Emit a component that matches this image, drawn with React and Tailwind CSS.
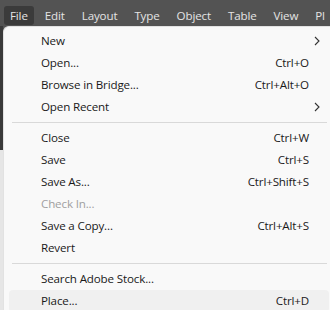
import React from 'react'

const MENUS = ['File', 'Edit', 'Layout', 'Type', 'Object', 'Table', 'View', 'Pl']

const ITEMS = [
  { label: 'New', sub: true },
  { label: 'Open...', keys: 'Ctrl+O' },
  { label: 'Browse in Bridge...', keys: 'Ctrl+Alt+O' },
  { label: 'Open Recent', sub: true },
  { sep: true },
  { label: 'Close', keys: 'Ctrl+W' },
  { label: 'Save', keys: 'Ctrl+S' },
  { label: 'Save As...', keys: 'Ctrl+Shift+S' },
  { label: 'Check In...', disabled: true },
  { label: 'Save a Copy...', keys: 'Ctrl+Alt+S' },
  { label: 'Revert' },
  { sep: true },
  { label: 'Search Adobe Stock...' },
  { label: 'Place...', keys: 'Ctrl+D', hover: true },
]

const Chevron = () => (
  <svg width="6" height="10" viewBox="0 0 6 10" className="text-[#333]">
    <path d="M1 1 L5 5 L1 9" fill="none" stroke="currentColor" strokeWidth="1.1" />
  </svg>
)

const App = () => {
  return (
    <div className="w-[330px] h-[310px] overflow-hidden bg-[#535353] font-['Open_Sans',sans-serif] text-[11.6px] tracking-[-0.15px]">
      {/* Menu bar */}
      <div className="h-[26px] flex items-end gap-[5px] pl-[4px] pb-[1px] whitespace-nowrap">
        {MENUS.map((m, i) => (
          <div
            key={m}
            className={`h-[19px] flex items-center px-[6px] rounded-[3px] text-[#e4e4e4] ${i === 0 ? 'bg-[#3b3b3b]' : ''}`}
          >
            {m}
          </div>
        ))}
      </div>

      <div className="flex h-[284px]">
        {/* background app strip */}
        <div className="w-[3px] flex flex-col">
          <div className="h-[124px] bg-[#3a3a3a]" />
          <div className="flex-1 bg-[#e6e6e6]" />
        </div>

        {/* Dropdown */}
        <div className="flex-1 bg-[#f9f9f9] border-l border-t border-[#e2e2e2] rounded-tl-[6px] pt-[3px] text-[#1a1a1a]">
          {ITEMS.map((it, i) =>
            it.sep ? (
              <div key={i} className="h-[9px] flex items-center pl-[8px] pr-[3px]">
                <div className="h-px w-full bg-[#d9d9d9]" />
              </div>
            ) : (
              <div
                key={i}
                className={`h-[22px] flex items-center ml-[5px] mr-[1px] pl-[32px] pr-[20px] rounded-[4px] ${it.hover ? 'bg-[#f0f0f0]' : ''} ${it.disabled ? 'text-[#a0a0a0]' : ''}`}
              >
                <span className="flex-1">{it.label}</span>
                {it.keys && <span>{it.keys}</span>}
                {it.sub && (
                  <span className="mr-[-11px]">
                    <Chevron />
                  </span>
                )}
              </div>
            )
          )}
        </div>
      </div>
    </div>
  )
}

export default App
